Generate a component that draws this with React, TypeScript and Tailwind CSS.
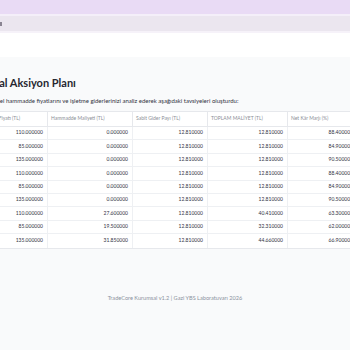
const columns = [
  { label: 'Satış Fiyatı (TL)', width: 'w-[63px]' },
  { label: 'Hammadde Maliyeti (TL)', width: 'w-[85px]' },
  { label: 'Sabit Gider Payı (TL)', width: 'w-[75px]' },
  { label: 'TOPLAM MALİYET (TL)', width: 'w-[80px]' },
  { label: 'Net Kâr Marjı (%)', width: 'w-[70px]' },
];

const rows = [
  ['110.000000', '0.000000', '12.810000', '12.810000', '88.400000'],
  ['85.000000', '0.000000', '12.810000', '12.810000', '84.900000'],
  ['135.000000', '0.000000', '12.810000', '12.810000', '90.500000'],
  ['110.000000', '0.000000', '12.810000', '12.810000', '88.400000'],
  ['85.000000', '0.000000', '12.810000', '12.810000', '84.900000'],
  ['135.000000', '0.000000', '12.810000', '12.810000', '90.500000'],
  ['110.000000', '27.600000', '12.810000', '40.410000', '63.300000'],
  ['85.000000', '19.500000', '12.810000', '32.310000', '62.000000'],
  ['135.000000', '31.850000', '12.810000', '44.660000', '66.900000'],
];

export default function App() {
  return (
    <div
      className="w-[350px] h-[350px] overflow-hidden bg-[#f9fafb] text-[#31333f]"
      style={{ fontFamily: 'Lato, "Noto Sans", sans-serif' }}
    >
      {/* Top bars */}
      <div className="h-[14px] bg-[#e9dbf5]" />
      <div className="h-[2px] bg-[#f4eff9]" />
      <div className="h-[15px] bg-[#ebe6ef] flex items-center">
        <span className="w-[2px] h-[4px] bg-[#8a8592]" />
      </div>
      <div className="h-[2px] bg-[#f6f2f9]" />
      <div className="h-[24px] bg-white" />

      {/* Content */}
      <div className="pt-[18px]">
        <h2 className="-ml-[16px] text-[11px] font-bold leading-[16px] whitespace-nowrap text-[#262730]">
          Final Aksiyon Planı
        </h2>
        <p className="-ml-[14px] mt-[5px] text-[6px] leading-[10px] whitespace-nowrap text-[#31333f]">
          Güncel hammadde fiyatlarını ve işletme giderlerinizi analiz ederek aşağıdaki tavsiyeleri oluşturdu:
        </p>

        <div className="-ml-[16px] mt-[5px] w-[400px] border-t border-b border-[#e6e8ec] bg-white">
          <div className="flex h-[15px] border-b border-[#e6e8ec]">
            {columns.map((c, i) => (
              <div
                key={c.label}
                className={`${c.width} shrink-0 flex items-center px-[3px] text-[5px] text-[#8c8f97] whitespace-nowrap ${i > 0 ? 'border-l border-[#e6e8ec]' : ''}`}
              >
                {c.label}
              </div>
            ))}
          </div>
          {rows.map((r, ri) => (
            <div key={ri} className={`flex h-[13.4px] ${ri < rows.length - 1 ? 'border-b border-[#eef0f3]' : ''}`}>
              {r.map((v, ci) => (
                <div
                  key={ci}
                  className={`${columns[ci].width} shrink-0 flex items-center justify-end px-[4px] text-[5px] whitespace-nowrap ${ci > 0 ? 'border-l border-[#eef0f3]' : ''}`}
                >
                  {v}
                </div>
              ))}
            </div>
          ))}
        </div>
      </div>

      <footer className="mt-[45px] text-center text-[5.6px] text-[#8b92a0]">
        TradeCore Kurumsal v1.2 | Gazi YBS Laboratuvarı 2026
      </footer>
    </div>
  );
}
